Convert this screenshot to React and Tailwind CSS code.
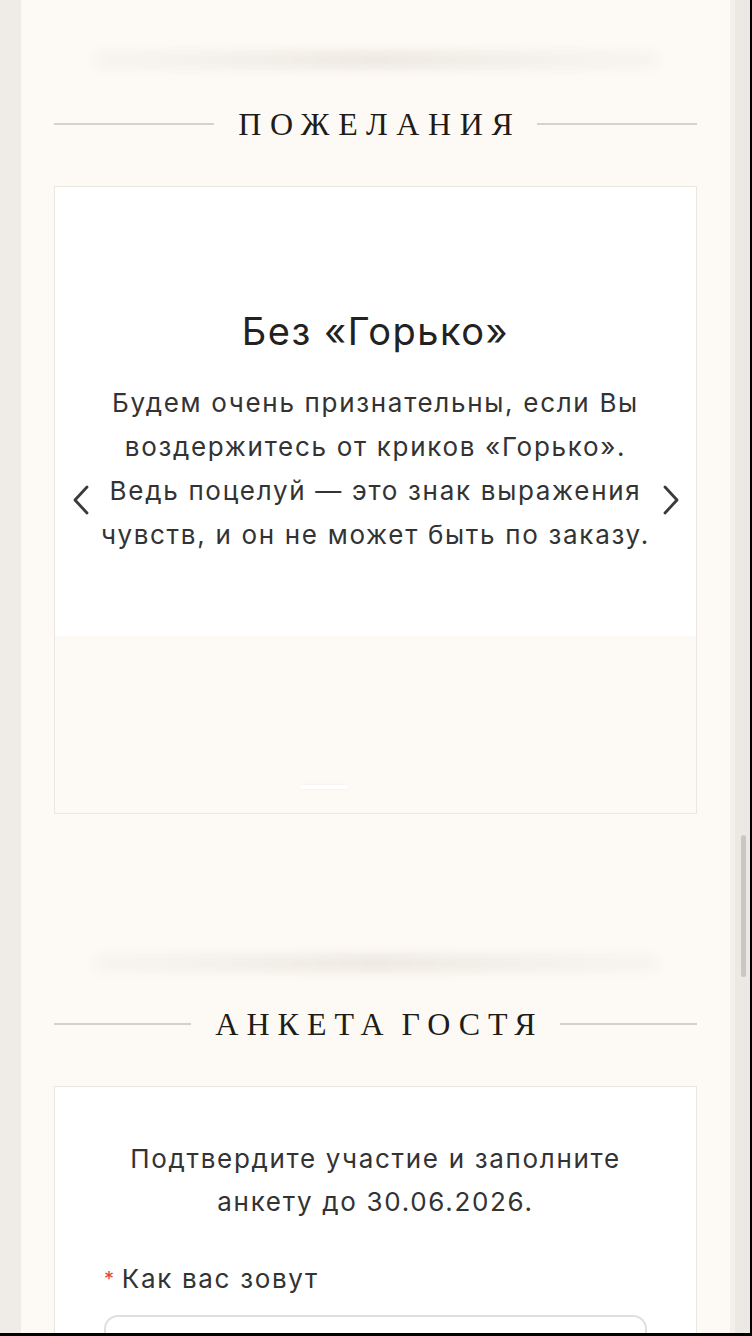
import React from 'react'

const serif = { fontFamily: '"Liberation Serif", "DejaVu Serif", serif' }

function SectionTitle({ children, className = 'tracking-[0.27em] mr-[-0.27em]' }) {
  return (
    <div className="flex items-center gap-[24px] px-[33px]">
      <div className="flex-1 h-[2px] bg-[#d6d2ca]" />
      <h2 className={`text-[32px] leading-none text-[#1f1c19] font-normal ${className}`} style={serif}>
        {children}
      </h2>
      <div className="flex-1 h-[2px] bg-[#d6d2ca]" />
    </div>
  )
}

function Haze() {
  return (
    <div className="px-[71px]">
      <div className="h-[20px] rounded-full bg-linear-to-r from-[#f8f5f0] via-[#efebe4] to-[#f8f5f0] blur-[4px]" />
    </div>
  )
}

function Chevron({ dir }) {
  const pts = dir === 'left' ? '15,2 3,15 15,28' : '3,2 15,15 3,28'
  return (
    <svg width="18" height="30" viewBox="0 0 18 30">
      <polyline points={pts} fill="none" stroke="#3a3a3a" strokeWidth="2.8" strokeLinecap="round" strokeLinejoin="round" />
    </svg>
  )
}

const body = 'text-[26px] tracking-[0.065em] text-[#333]'

export default function App() {
  return (
    <div
      className="w-[752px] h-[1336px] overflow-hidden flex bg-[#efebe6] border-r-2 border-b-[3px] border-black text-[#2d2b29]"
      style={{ fontFamily: 'Inter, "Open Sans", sans-serif' }}
    >
      <div className="w-[21px] shrink-0" />
      <main className="w-[709px] shrink-0 bg-[#fdfaf5] pt-[50px]">
        <Haze />
        <div className="mt-[38px]">
          <SectionTitle>ПОЖЕЛАНИЯ</SectionTitle>
        </div>

        <div className="relative mx-[33px] mt-[46px] h-[628px] border border-[#ebe7e0] flex flex-col">
          <div className="h-[449px] bg-white flex flex-col items-center pt-[124px]">
            <h3 className="text-[38px] leading-[40px] tracking-[0.04em] text-[#222] font-normal">Без «Горько»</h3>
            <p className={`mt-[30px] text-center leading-[44px] whitespace-nowrap ${body}`}>
              Будем очень признательны, если Вы
              <br />
              воздержитесь от криков «Горько».
              <br />
              Ведь поцелуй — это знак выражения
              <br />
              чувств, и он не может быть по заказу.
            </p>
          </div>
          <div className="flex-1 bg-[#fdfaf5] flex items-end justify-center gap-[4px] pb-[24px]">
            <div className="w-[48px] h-[4px] rounded-full bg-white shadow-[0_0_3px_rgba(0,0,0,0.06)]" />
            <div className="w-[48px] h-[4px] rounded-full bg-transparent" />
            <div className="w-[48px] h-[4px] rounded-full bg-transparent" />
          </div>
          <div className="absolute left-[17px] top-1/2 -translate-y-1/2">
            <Chevron dir="left" />
          </div>
          <div className="absolute right-[16px] top-1/2 -translate-y-1/2">
            <Chevron dir="right" />
          </div>
        </div>

        <div className="mt-[139px]">
          <Haze />
        </div>
        <div className="mt-[35px]">
          <SectionTitle className="tracking-[0.25em] mr-[-0.25em] [word-spacing:-6px]">АНКЕТА ГОСТЯ</SectionTitle>
        </div>

        <div className="mx-[33px] mt-[46px] bg-white border border-[#ebe7e0] px-[49px] pt-[50px] pb-[40px]">
          <p className={`text-center leading-[43px] whitespace-nowrap ${body}`}>
            Подтвердите участие и заполните
            <br />
            анкету до 30.06.2026.
          </p>
          <div className={`mt-[36px] leading-[40px] ${body}`}>
            <span className="text-[#e0443e] text-[20px] align-top mr-[6px]">*</span>Как вас зовут
          </div>
          <div className="mt-[16px] h-[56px] rounded-[14px] border-2 border-[#e3e0db] bg-white" />
        </div>
      </main>
      <div className="relative flex-1 bg-[#ece9e4] border-l-[5px] border-[#f3f0eb]">
        <div className="absolute left-[6px] top-[835px] w-[5px] h-[142px] rounded-full bg-[#c9c7c4]" />
      </div>
    </div>
  )
}
